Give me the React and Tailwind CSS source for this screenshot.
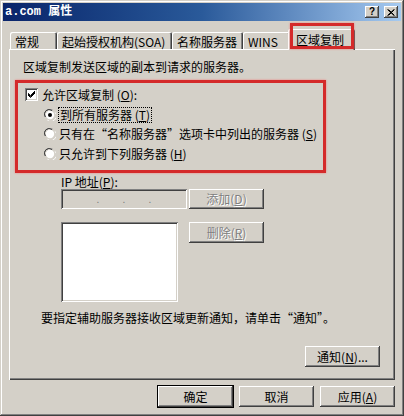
import React from "react";

const raised =
  "shadow-[inset_-1px_-1px_0_#404040,inset_1px_1px_0_#ffffff,inset_-2px_-2px_0_#808080,inset_2px_2px_0_#d4d0c8]";
const sunken =
  "shadow-[inset_1px_1px_0_#808080,inset_-1px_-1px_0_#ffffff,inset_2px_2px_0_#404040,inset_-2px_-2px_0_#d4d0c8]";

function Btn({ children, disabled, def, className = "" }) {
  return (
    <div
      className={`flex items-center justify-center bg-[#d4d0c8] ${raised} ${
        def ? "outline outline-1 outline-black -outline-offset-0" : ""
      } ${disabled ? "text-[#808080] [text-shadow:1px_1px_0_#ffffff]" : "text-black"} ${className}`}
    >
      {children}
    </div>
  );
}

function Radio({ checked }) {
  return (
    <div className="relative w-[12px] h-[12px] shrink-0">
      <svg width="12" height="12" viewBox="0 0 12 12" className="absolute inset-0">
        <path d="M0.5 7.5 A5.5 5.5 0 0 1 8.5 1" fill="none" stroke="#808080" strokeWidth="1" />
        <path d="M1.5 8 A4.5 4.5 0 0 1 8 1.8" fill="none" stroke="#404040" strokeWidth="1" />
        <circle cx="6" cy="6" r="4.2" fill="#ffffff" />
        <path d="M3.5 11.2 A5.5 5.5 0 0 0 11.2 3.5" fill="none" stroke="#ffffff" strokeWidth="1" />
        <path d="M3.8 10.2 A4.5 4.5 0 0 0 10.2 3.8" fill="none" stroke="#d4d0c8" strokeWidth="1" />
        {checked && <circle cx="6" cy="6" r="2" fill="#000" />}
      </svg>
    </div>
  );
}

function U({ children }) {
  return <span className="underline underline-offset-[1px]">{children}</span>;
}

export default function App() {
  return (
    <div className="relative overflow-hidden w-[404px] h-[416px] bg-[#d4d0c8] p-[3px] flex flex-col text-[12px] leading-[12px] text-black font-['Noto_Sans_CJK_SC','Noto_Sans',sans-serif] shadow-[inset_-1px_-1px_0_#404040,inset_1px_1px_0_#d4d0c8,inset_-2px_-2px_0_#808080,inset_2px_2px_0_#ffffff]">
      {/* Title bar */}
      <div className="h-[18px] flex items-center bg-gradient-to-r from-[#0a246a] via-[#2a5a9a] to-[#a6caf0]">
        <div className="pl-[2px] text-white font-bold text-[12px] leading-[12px] font-['Liberation_Mono','Noto_Sans_CJK_SC',monospace] flex-1">
          a.com 属性
        </div>
        <div className="flex gap-[5px] pr-[3px]">
          <div className={`w-[14px] h-[12px] bg-[#d4d0c8] ${raised} flex items-center justify-center text-[10px] font-bold leading-none font-['Liberation_Sans',sans-serif]`}>
            ?
          </div>
          <div className={`w-[14px] h-[12px] bg-[#d4d0c8] ${raised} flex items-center justify-center`}>
            <svg width="8" height="7" viewBox="0 0 8 7">
              <path d="M0.5 0.5 L7 6.5 M1.5 0.5 L7.5 6.5 M7 0.5 L0.5 6.5 M7.5 0.5 L1.5 6.5" stroke="#000" strokeWidth="1" />
            </svg>
          </div>
        </div>
      </div>

      {/* Tabs */}
      <div className="mt-[8px] h-[20px] flex items-end pl-[7px] relative z-10">
        {[
          ["常规", "w-[47px]"],
          ["起始授权机构(SOA)", "w-[115px]"],
          ["名称服务器", "w-[71px]"],
          ["WINS", "w-[47px]"],
        ].map(([t, w]) => (
          <div
            key={t}
            className={`${w} h-[17px] pl-[5px] pt-[4px] whitespace-nowrap rounded-t-[2px] shadow-[inset_1px_1px_0_#ffffff,inset_-1px_0_0_#404040,inset_-2px_0_0_#808080]`}
          >
            {t}
          </div>
        ))}
        <div className="relative -ml-[2px] w-[67px] h-[21px] -mb-[1px] pl-[8px] pt-[5px] bg-[#d4d0c8] rounded-t-[2px] shadow-[inset_1px_1px_0_#ffffff,inset_-1px_0_0_#404040,inset_-2px_0_0_#808080]">
          区域复制
          <div className="absolute left-[2px] top-[-6px] w-[64px] h-[26px] border-[3px] border-[#d42a2a] shadow-[0_0_2px_#f08080]" />
        </div>
      </div>

      {/* Panel */}
      <div className="ml-[6px] mr-[6px] h-[331px] flex flex-col shadow-[inset_1px_1px_0_#ffffff,inset_-1px_-1px_0_#404040,inset_-2px_-2px_0_#808080]">
        <div className="ml-[14px] mt-[12px]">区域复制发送区域的副本到请求的服务器。</div>

        <div className="ml-[6px] mt-[7px] w-[311px] h-[93px] border-[3px] border-[#d42a2a] shadow-[0_0_2px_#f08080] flex flex-col">
          <div className="flex items-center pl-[7px] pt-[5px] h-[18px]">
            <div className="w-[13px] h-[13px] bg-white shadow-[inset_1px_1px_0_#808080,inset_-1px_-1px_0_#ffffff,inset_2px_2px_0_#404040,inset_-2px_-2px_0_#d4d0c8] flex items-center justify-center">
              <svg width="9" height="9" viewBox="0 0 9 9">
                <path d="M1 4 L3.5 6.5 L8 2 M1 5 L3.5 7.5 L8 3 M1 3.2 L3.5 5.6 L8 1" stroke="#000" strokeWidth="1" fill="none" />
              </svg>
            </div>
            <div className="ml-[4px]">
              允许区域复制 (<U>O</U>):
            </div>
          </div>
          <div className="mt-[4px] flex flex-col pl-[26px]">
            <div className="h-[19px] flex items-center">
              <Radio checked />
              <div className="ml-[2px] px-[1px] py-[1px] border border-dotted border-black">
                到所有服务器 (<U>T</U>)
              </div>
            </div>
            <div className="h-[20px] flex items-center">
              <Radio />
              <div className="ml-[3px]">
                只有在“名称服务器”选项卡中列出的服务器 (<U>S</U>)
              </div>
            </div>
            <div className="h-[19px] flex items-center">
              <Radio />
              <div className="ml-[3px]">
                只允许到下列服务器 (<U>H</U>)
              </div>
            </div>
          </div>
        </div>

        <div className="ml-[52px] mt-[3px]">
          IP 地址(<U>P</U>):
        </div>
        <div className="ml-[52px] mt-[1px] flex">
          <div className={`w-[126px] h-[20px] bg-[#d4d0c8] ${sunken} flex items-center justify-around px-[24px] text-[#808080] text-[10px]`}>
            <span>.</span>
            <span>.</span>
            <span>.</span>
          </div>
          <Btn disabled className="ml-[2px] w-[75px] h-[20px]">
            添加(<U>D</U>)
          </Btn>
        </div>
        <div className="ml-[52px] mt-[13px] flex items-start">
          <div className={`w-[117px] h-[80px] bg-white ${sunken}`} />
          <Btn disabled className="ml-[11px] w-[75px] h-[21px]">
            删除(<U>R</U>)
          </Btn>
        </div>

        <div className="ml-[32px] mt-[10px]">要指定辅助服务器接收区域更新通知，请单击“通知”。</div>

        <div className="mt-[22px] flex justify-end pr-[15px]">
          <Btn className="w-[75px] h-[21px]">
            通知(<U>N</U>)...
          </Btn>
        </div>
      </div>

      {/* Bottom buttons */}
      <div className="mt-[6px] flex justify-end gap-[6px] pr-[6px]">
        <Btn def className="w-[75px] h-[21px]">确定</Btn>
        <Btn className="w-[75px] h-[21px]">取消</Btn>
        <Btn className="w-[75px] h-[21px]">
          应用(<U>A</U>)
        </Btn>
      </div>
    </div>
  );
}
